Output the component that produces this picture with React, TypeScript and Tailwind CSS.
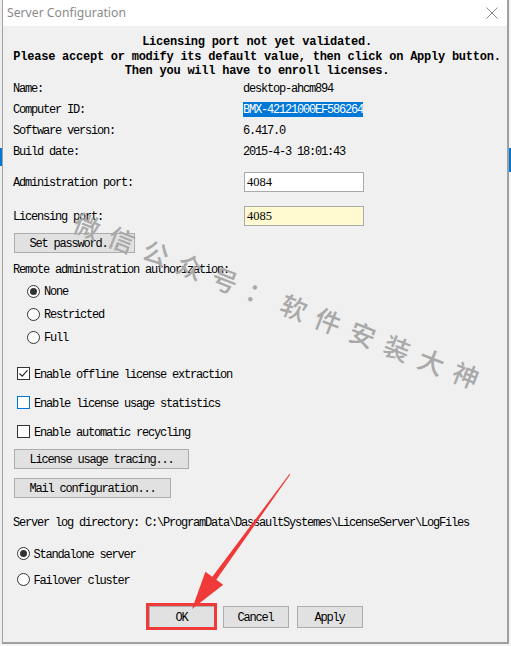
import React from 'react'

const mono = "font-['Liberation_Mono','Courier_New',monospace] text-[12px] tracking-[-1.2px] text-black whitespace-pre"

// Liberation Mono sits a little high compared to the original bitmap font
const nudge = 'relative top-px'

function Radio({ checked }: { checked?: boolean }) {
  return (
    <span className="flex h-[13px] w-[13px] shrink-0 items-center justify-center rounded-full border border-[#333] bg-white">
      {checked && <span className="h-[7px] w-[7px] rounded-full bg-[#333]" />}
    </span>
  )
}

function Checkbox({ checked, focus }: { checked?: boolean; focus?: boolean }) {
  return (
    <span
      className={`flex h-[13px] w-[13px] shrink-0 items-center justify-center border bg-white ${
        focus ? 'border-[#0078d7]' : 'border-[#333]'
      }`}
    >
      {checked && (
        <svg width="11" height="11" viewBox="0 0 11 11">
          <path d="M1.5 5.5 L4.2 8.2 L9.6 2.2" fill="none" stroke="#222" strokeWidth="1.1" />
        </svg>
      )}
    </span>
  )
}

function Btn({ children, className = '' }: { children: React.ReactNode; className?: string }) {
  return (
    <div
      className={`flex items-center justify-center border border-[#adadad] bg-[#e1e1e1] ${mono} ${className}`}
    >
      <span className={nudge}>{children}</span>
    </div>
  )
}

function InfoRow({ label, children }: { label: string; children: React.ReactNode }) {
  return (
    <div className="flex h-[21px] items-center">
      <span className={`w-[230px] ${nudge}`}>{label}</span>
      {children}
    </div>
  )
}

function PortRow({ label, value, yellow }: { label: string; value: string; yellow?: boolean }) {
  return (
    <div className="flex h-[20px] items-center">
      <span className={`w-[231px] ${nudge}`}>{label}</span>
      <div
        className={`flex h-[20px] w-[120px] items-center border border-[#aaaaaa] pl-[2px] font-['Liberation_Serif',serif] text-[12.5px] tracking-normal ${
          yellow ? 'bg-[#fffad0]' : 'bg-white'
        }`}
      >
        {value}
      </div>
    </div>
  )
}

export default function App() {
  return (
    <div className="relative h-[646px] w-[511px] overflow-hidden bg-[#f4f4f4]">
      <div className="flex h-[644px]">
        {/* left edge of the window behind */}
        <div className="flex w-[2px] flex-col bg-[#eeeeee]">
          <div className="h-[148px]" />
          <div className="h-[18px] bg-[#0078d7]" />
        </div>

        {/* dialog window */}
        <div className="flex w-[507px] flex-col border-b-2 border-l border-r-2 border-[#a0a0a0]">
          <div className="flex h-[26px] shrink-0 items-center justify-between bg-white pl-[4px] pr-[9px]">
            <span className="font-['Noto_Sans',sans-serif] text-[12.2px] text-[#8a8a8a]">
              Server Configuration
            </span>
            <svg width="12" height="12" viewBox="0 0 12 12">
              <path d="M0.5 0.5 L11.5 11.5 M11.5 0.5 L0.5 11.5" stroke="#8a8a8a" strokeWidth="1" />
            </svg>
          </div>

          <div className={`flex flex-1 flex-col bg-[#f0f0f0] ${mono}`}>
            <div className="mt-[9px] pl-[4px] text-center text-[12px] font-bold leading-[14.5px] tracking-[-0.24px]">
              <div>Licensing port not yet validated.</div>
              <div>Please accept or modify its default value, then click on Apply button.</div>
              <div>Then you will have to enroll licenses.</div>
            </div>

            <div className="flex flex-col pl-[10px]">
              <div className="-mt-px flex flex-col">
                <InfoRow label="Name:">
                  <span className={nudge}>desktop-ahcm894</span>
                </InfoRow>
                <InfoRow label="Computer ID:">
                  <span className="inline-block bg-[#0078d7] pt-[2px] leading-[13px] text-white">
                    BMX-42121000EF586264
                  </span>
                </InfoRow>
                <InfoRow label="Software version:">
                  <span className={nudge}>6.417.0</span>
                </InfoRow>
                <InfoRow label="Build date:">
                  <span className={nudge}>2015-4-3 18:01:43</span>
                </InfoRow>
              </div>

              <div className="mt-[10.5px]">
                <PortRow label="Administration port:" value="4084" />
              </div>
              <div className="mt-[14px]">
                <PortRow label="Licensing port:" value="4085" yellow />
              </div>

              <Btn className="ml-px mt-[7px] h-[20px] w-[121px]">Set password...</Btn>

              <div className="mt-[8px] flex h-[16px] items-center">
                <span className={nudge}>Remote administration authorization:</span>
              </div>

              <div className="mt-[2.5px] flex flex-col pl-[14px]">
                {[
                  ['None', true],
                  ['Restricted', false],
                  ['Full', false],
                ].map(([label, on]) => (
                  <div key={label as string} className="flex h-[23px] items-center gap-[4px]">
                    <Radio checked={on as boolean} />
                    <span className={nudge}>{label}</span>
                  </div>
                ))}
              </div>

              <div className="mt-[10.5px] flex flex-col pl-[4px]">
                <div className="flex h-[29px] items-center gap-[4px]">
                  <Checkbox checked />
                  <span className={nudge}>Enable offline license extraction</span>
                </div>
                <div className="flex h-[29px] items-center gap-[4px]">
                  <Checkbox focus />
                  <span className={nudge}>Enable license usage statistics</span>
                </div>
                <div className="flex h-[29px] items-center gap-[4px]">
                  <Checkbox />
                  <span className={nudge}>Enable automatic recycling</span>
                </div>
              </div>

              <Btn className="ml-px mt-[3px] h-[20px] w-[175px]">License usage tracing...</Btn>
              <Btn className="ml-px mt-[9px] h-[20px] w-[157px]">Mail configuration...</Btn>

              <div className="mt-[15.5px] flex h-[16px] items-center">
                <span className={nudge}>
                  Server log directory: C:\ProgramData\DassaultSystemes\LicenseServer\LogFiles
                </span>
              </div>

              <div className="mt-[11px] flex flex-col pl-[4px]">
                <div className="flex h-[26px] items-center gap-[3.5px]">
                  <Radio checked />
                  <span className={nudge}>Standalone server</span>
                </div>
                <div className="flex h-[26px] items-center gap-[3.5px]">
                  <Radio />
                  <span className={nudge}>Failover cluster</span>
                </div>
              </div>
            </div>

            <div className="mt-[13.5px] flex justify-center gap-[8px] pl-px">
              <Btn className="h-[22px] w-[66px]">OK</Btn>
              <Btn className="h-[22px] w-[66px]">Cancel</Btn>
              <Btn className="h-[22px] w-[66px]">Apply</Btn>
            </div>
          </div>
        </div>

        {/* right edge of the window behind */}
        <div className="flex w-[2px] flex-col bg-[#f4f4f4]">
          <div className="h-[148px]" />
          <div className="h-[24px] bg-[#0078d7]" />
        </div>
      </div>

      {/* watermark */}
      <div className="pointer-events-none absolute left-[41px] top-[285px] w-[472px] rotate-[21.5deg] whitespace-nowrap pl-[11px] text-center font-['Noto_Sans_CJK_SC',sans-serif] text-[26px] font-medium leading-[29px] tracking-[11px] text-[#a9a9a9]">
        微信公众号：软件安装大神
      </div>

      {/* annotation: arrow and frame round OK */}
      <svg className="pointer-events-none absolute left-0 top-0" width="511" height="646" viewBox="0 0 511 646">
        <polygon
          points="290.4,474.3 216.3,579.7 223.2,584.7 192,609 205.4,571.7 212.3,576.7 289.6,473.7"
          fill="#f03a3a"
        />
        <rect x="147.5" y="604.5" width="68" height="24" fill="none" stroke="#f03a3a" strokeWidth="3" />
      </svg>
    </div>
  )
}
